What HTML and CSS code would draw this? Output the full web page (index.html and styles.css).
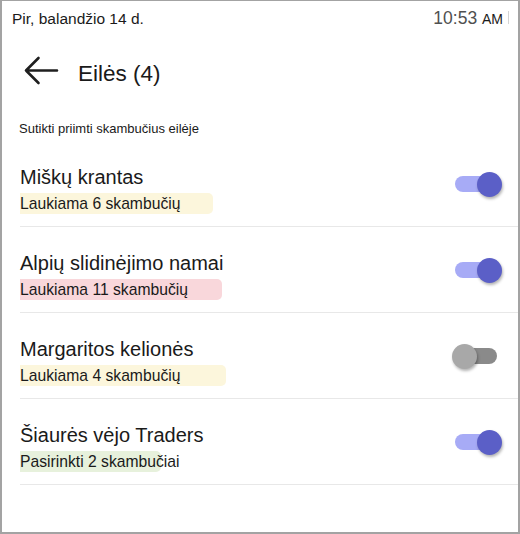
FILE: index.html
```html
<!DOCTYPE html>
<html>
<head>
  <meta charset="UTF-8"/>
  <title>Eilės</title>
  <link rel="stylesheet" href="styles.css">
</head>
<body>
  <div class="frame">
    <div class="status">
      <span class="date">Pir, balandžio 14 d.</span>
      <span class="clock">10:53 <small>AM</small><i class="caret"></i></span>
    </div>

    <div class="header">
      <svg class="back" width="36" height="30" viewBox="0 0 36 30">
        <path d="M34 14.5H3 M15.5 2L3 14.5L15.5 27" fill="none" stroke="#1f1f1f" stroke-width="2.6" stroke-linecap="round" stroke-linejoin="round"/>
      </svg>
      <h1>Eilės (4)</h1>
    </div>

    <p class="hint">Sutikti priimti skambučius eilėje</p>

    <div class="list">
      <div class="row">
        <div class="info">
          <div class="name">Miškų krantas</div>
          <span class="tag yellow w1">Laukiama 6 skambučių</span>
        </div>
        <div class="toggle on"><span class="track"></span><span class="knob"></span></div>
      </div>
      <div class="row">
        <div class="info">
          <div class="name">Alpių slidinėjimo namai</div>
          <span class="tag pink w2">Laukiama 11 skambučių</span>
        </div>
        <div class="toggle on"><span class="track"></span><span class="knob"></span></div>
      </div>
      <div class="row">
        <div class="info">
          <div class="name">Margaritos kelionės</div>
          <span class="tag yellow w3">Laukiama 4 skambučių</span>
        </div>
        <div class="toggle"><span class="track"></span><span class="knob"></span></div>
      </div>
      <div class="row">
        <div class="info">
          <div class="name">Šiaurės vėjo Traders</div>
          <span class="tag green w4">Pasirinkti 2 skambučiai</span>
        </div>
        <div class="toggle on"><span class="track"></span><span class="knob"></span></div>
      </div>
    </div>
  </div>
</body>
</html>
```

FILE: styles.css
```css
body, html {
    margin: 0;
    background-color: #fff;
    font-family: "Liberation Sans", Arial, sans-serif;
    color: #1a1a1a;
}
.frame {
    width: 520px;
    height: 534px;
    box-sizing: border-box;
    border: 2px solid #a3a3a3;
    border-top-width: 1px;
    overflow: hidden;
}
/* top status line */
.status {
    display: flex;
    justify-content: space-between;
    align-items: baseline;
    padding: 7px 9px 0 10px;
    line-height: 20px;
}
.date {
    font-size: 15.5px;
}
.clock {
    font-size: 17.5px;
    color: #505050;
    position: relative;
    padding-right: 6px;
}
.clock small {
    font-size: 14px;
    color: #1a1a1a;
}
.caret {
    position: absolute;
    right: 0;
    top: 3px;
    width: 1px;
    height: 13px;
    background-color: #d4d4d4;
}
/* header with back arrow */
.header {
    display: flex;
    align-items: center;
    margin-top: 30px;
    padding-left: 21px;
    height: 29px;
}
.back {
    margin-right: 19px;
    margin-top: -6px;
}
.header h1 {
    margin: 0;
    font-size: 22.5px;
    font-weight: normal;
    line-height: 28px;
}
.hint {
    margin: 33px 0 0 17px;
    font-size: 13px;
    line-height: 16px;
}
/* queue rows */
.list {
    margin-top: 4px;
    margin-left: 18px;
}
.row {
    display: flex;
    justify-content: space-between;
    align-items: flex-start;
    padding: 24px 16px 12px 0;
    border-bottom: 1px solid #e8e8e8;
}
.name {
    font-size: 20px;
    line-height: 24px;
    margin-bottom: 4px;
}
.tag {
    display: inline-block;
    font-size: 15.7px;
    line-height: 21px;
    white-space: nowrap;
    border-radius: 0 5px 5px 0;
}
.yellow { background-color: #fcf6dc; }
.pink { background-color: #f9d7db; }
.green { background-color: #e7f1dc; }
.w1 { width: 193px; }
.w2 { width: 202px; }
.w3 { width: 206px; }
.w4 { width: 141px; }
/* switches */
.toggle {
    position: relative;
    width: 47px;
    height: 25px;
    margin-top: 7px;
}
.track {
    position: absolute;
    left: 0;
    top: 4px;
    width: 42px;
    height: 16px;
    border-radius: 8px;
    background-color: #8a8a8a;
}
.knob {
    position: absolute;
    left: -3px;
    top: 0;
    width: 25px;
    height: 25px;
    border-radius: 50%;
    background-color: #a8a8a8;
    box-shadow: 1px 2px 3px rgba(0, 0, 0, 0.3);
}
.toggle.on .track {
    background-color: #a7abf6;
}
.toggle.on .knob {
    left: 22px;
    background-color: #5b5fc7;
}
```
